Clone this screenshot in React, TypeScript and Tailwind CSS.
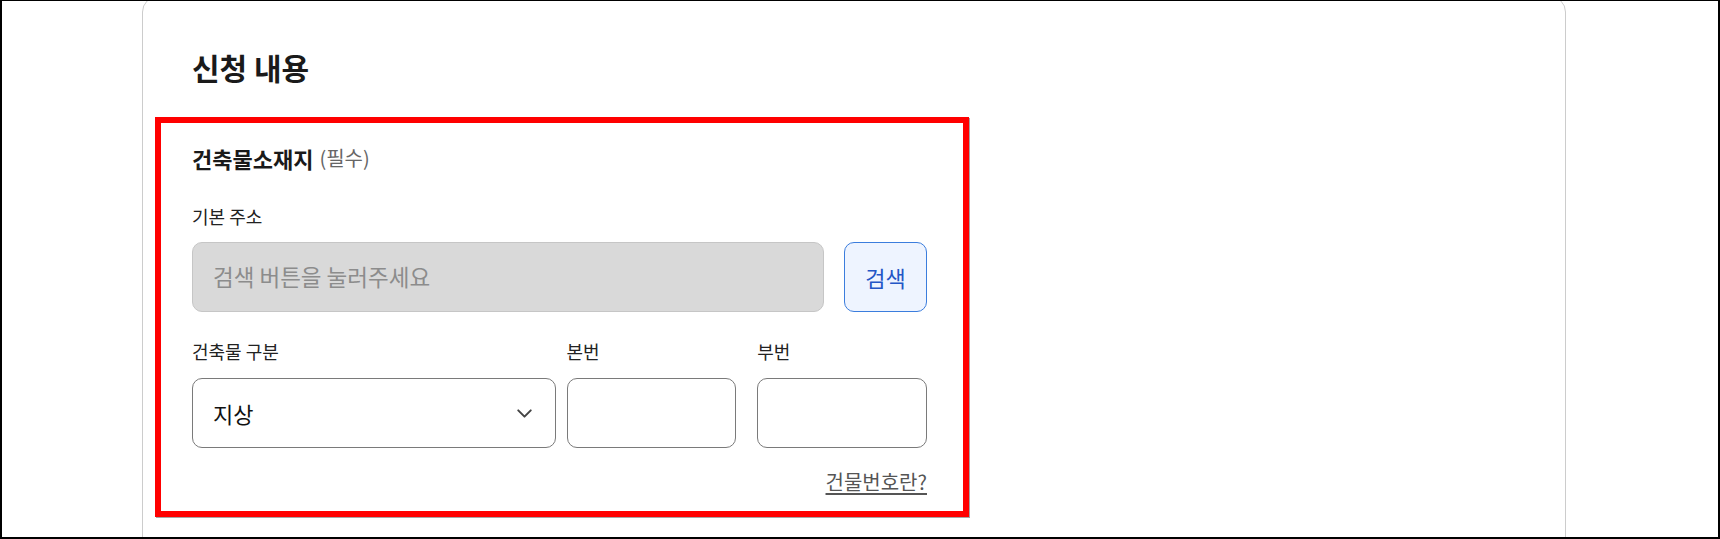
import { ChevronDown } from "lucide-react";

const font = { fontFamily: '"Noto Sans CJK KR", "Noto Sans", sans-serif' };

function FieldLabel({ children }: { children: React.ReactNode }) {
  return <div className="flex h-[24px] items-center text-[18px] text-[#222222]">{children}</div>;
}

export default function App() {
  return (
    <div
      style={font}
      className="h-[539px] w-full overflow-hidden border-x-2 border-t border-b-2 border-black bg-white"
    >
      <div className="-mt-[5px] ml-[140px] h-[600px] w-[1424px] rounded-2xl border border-[#cccccc] bg-white px-[12px] pt-[50px]">
        <h1 className="flex h-[40px] items-center pl-[37px] text-[30px] font-bold text-[#1a1a1a]">신청 내용</h1>

        <section className="mt-[30px] h-[400px] w-[814px] border-[6px] border-[#ff0000] bg-white pl-[31px] pr-[36px] pt-[20px] shadow-[1px_1px_0_rgba(0,0,0,0.35)]">
          <div className="flex h-[30px] items-center gap-[6px]">
            <span className="text-[22px] font-bold text-[#1a1a1a]">건축물소재지</span>
            <span className="text-[20px] text-[#666666]">(필수)</span>
          </div>

          <div className="mt-[31px]">
            <FieldLabel>기본 주소</FieldLabel>
          </div>
          <div className="mt-[14px] flex h-[70px] gap-[20px]">
            <div className="flex w-[632px] items-center rounded-[10px] border border-[#c6c6c6] bg-[#d9d9d9] px-[20px] text-[22.5px] text-[#8c8c8c]">
              검색 버튼을 눌러주세요
            </div>
            <button className="flex w-[83px] items-center justify-center rounded-[10px] border border-[#3b7ddd] bg-[#eef4ff] text-[22px] text-[#2356c6]">
              검색
            </button>
          </div>

          <div className="mt-[27px] flex">
            <div className="w-[375px]">
              <FieldLabel>건축물 구분</FieldLabel>
            </div>
            <div className="w-[191px]">
              <FieldLabel>본번</FieldLabel>
            </div>
            <div className="w-[170px]">
              <FieldLabel>부번</FieldLabel>
            </div>
          </div>
          <div className="mt-[15px] flex h-[70px]">
            <div className="flex w-[364px] items-center justify-between rounded-[10px] border border-[#7a7a7a] pl-[20px] pr-[18px] text-[22px] text-[#111111]">
              <span>지상</span>
              <ChevronDown size={25} strokeWidth={1.9} className="text-[#444444]" />
            </div>
            <div className="ml-[11px] w-[170px] rounded-[10px] border border-[#7a7a7a]" />
            <div className="ml-[21px] w-[170px] rounded-[10px] border border-[#7a7a7a]" />
          </div>

          <div className="mt-[22px] flex h-[24px] items-center justify-end">
            <a className="text-[20px] text-[#555555] underline decoration-[#555555] decoration-2 underline-offset-[3px]">
              건물번호란?
            </a>
          </div>
        </section>
      </div>
    </div>
  );
}
